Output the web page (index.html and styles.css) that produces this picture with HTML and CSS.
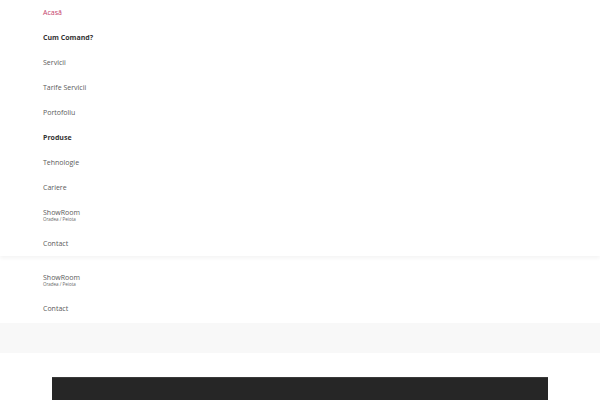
FILE: index.html
```html
<!DOCTYPE html>
<html>
<head>
<meta charset="utf-8">
<link rel="stylesheet" href="styles.css">
</head>
<body>
<div class="panel">
  <ul class="menu">
    <li class="item active">Acasă</li>
    <li class="item bold">Cum Comand?</li>
    <li class="item">Servicii</li>
    <li class="item">Tarife Servicii</li>
    <li class="item">Portofoliu</li>
    <li class="item bold">Produse</li>
    <li class="item">Tehnologie</li>
    <li class="item">Cariere</li>
    <li class="item two">ShowRoom<span class="sub">Oradea / Peiota</span></li>
    <li class="item">Contact</li>
  </ul>
</div>
<ul class="menu lower">
  <li class="item two">ShowRoom<span class="sub">Oradea / Peiota</span></li>
  <li class="item">Contact</li>
</ul>
<div class="band"></div>
<div class="dark"></div>
</body>
</html>
```
FILE: styles.css
```css
html, body {
  margin: 0;
  padding: 0;
  background: #fff;
  font-family: "Open Sans", "Liberation Sans", sans-serif;
  overflow: hidden;
}
.panel {
  background: #fff;
  box-shadow: 0 2px 4px rgba(0,0,0,0.05);
  position: relative;
  z-index: 1;
}
.menu {
  list-style: none;
  margin: 0;
  padding: 0 0 0 43px;
  display: flex;
  flex-direction: column;
}
.item {
  height: 25px;
  line-height: 25px;
  font-size: 7px;
  color: #5a5a5a;
  display: flex;
  flex-direction: column;
}
.item.active {
  color: #c43d6a;
}
.item.bold {
  font-weight: 700;
  color: #333;
}
.item.two {
  height: 31px;
  line-height: 9px;
  justify-content: flex-start;
  padding-top: 8px;
  box-sizing: border-box;
}
.sub {
  font-size: 4.5px;
  line-height: 5px;
  color: #666;
}
.lower {
  padding-top: 9px;
  padding-bottom: 2px;
}
.band {
  height: 30px;
  background: #f8f8f8;
}
.dark {
  margin: 24px 52px 0;
  height: 30px;
  background: #262626;
  border-top: 1px solid #3a3a3a;
}
```
